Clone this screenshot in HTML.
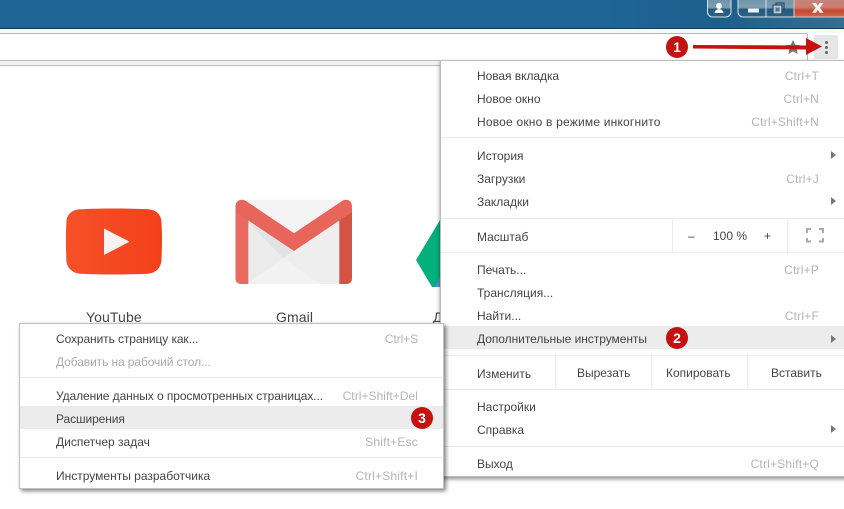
<!DOCTYPE html>
<html><head><meta charset="utf-8"><style>
html,body{margin:0;padding:0;background:#fff}
#r{position:relative;width:844px;height:509px;overflow:hidden;background:#fff;font-family:"Liberation Sans",sans-serif;font-size:12px;color:#444}
#r div{position:absolute}
.t{white-space:nowrap;line-height:16px}
.s{white-space:nowrap;line-height:16px;color:#b4b4b4;letter-spacing:.2px;text-align:right}
.h{height:1px;background:#ebebeb}
.v{width:1px;background:#ebebeb}
.a{width:0;height:0;border-left:5px solid #777;border-top:4px solid transparent;border-bottom:4px solid transparent}
.b{width:22px;height:22px;border-radius:50%;background:#c3120f;color:#fff;font-weight:bold;font-size:14px;line-height:22px;text-align:center}
.l{white-space:nowrap;font-size:14px;color:#444;line-height:18px;letter-spacing:.1px}
</style></head><body><div id="r">
<div style="left:0;top:0;width:844px;height:28px;background:linear-gradient(90deg,#1f6596 0,#1f6596 72%,#1c5f8c 85%,#356f90 100%)"></div>
<div style="left:0;top:28px;width:844px;height:1px;background:#123c55"></div>
<div style="left:0;top:29px;width:844px;height:4px;background:#f4f9fc"></div>
<div style="left:-6px;top:33px;width:812px;height:26px;background:#fff;border:1px solid #b9b9b9;border-radius:2px"></div>
<div style="left:0;top:61px;width:844px;height:4px;background:#f2f2f2"></div>
<div style="left:0;top:65px;width:844px;height:1px;background:#bcbcbc"></div>
<div style="left:814px;top:35px;width:24px;height:24px;background:#e6e6e6;border-radius:2px"></div>
<div style="left:825px;top:41px;width:3px;height:3px;border-radius:50%;background:#666"></div>
<div style="left:825px;top:46px;width:3px;height:3px;border-radius:50%;background:#666"></div>
<div style="left:825px;top:51px;width:3px;height:3px;border-radius:50%;background:#666"></div>

<svg style="position:absolute;left:700px;top:0" width="144" height="30">
<defs><linearGradient id="gl" x1="0" y1="0" x2="0" y2="1"><stop offset="0" stop-color="#6f93a9"/><stop offset=".5" stop-color="#7d9db2"/><stop offset=".6" stop-color="#24597c"/><stop offset="1" stop-color="#2e6485"/></linearGradient>
<linearGradient id="rd" x1="0" y1="0" x2="0" y2="1"><stop offset="0" stop-color="#c08a82"/><stop offset=".5" stop-color="#cf7a6c"/><stop offset=".65" stop-color="#c8452c"/><stop offset="1" stop-color="#c96a58"/></linearGradient></defs>
<path d="M7.500 -2V12a5 5 0 0 0 5 5H26a5 5 0 0 0 5-5V-2z" fill="url(#gl)" stroke="#d5e0e8"/>
<path d="M38 -2V12a5 5 0 0 0 5 5H94V-2z" fill="url(#gl)" stroke="#d5e0e8"/>
<path d="M94 -2V17H144V-2z" fill="url(#rd)"/>
<path d="M94 0V17H144" fill="none" stroke="#d5c8c6"/>
<path d="M66 0V17" stroke="#d5e0e8"/>
<circle cx="19" cy="6" r="3" fill="#fff"/><path d="M14.500 13c0-5 9-5 9 0z" fill="#fff"/>
<rect x="48" y="8.500" width="11" height="4" fill="#f0f3f5"/>
<rect x="76" y="3" width="8" height="8" fill="none" stroke="#2c4d64" stroke-width="1.200"/>
<rect x="73" y="5" width="9" height="9" fill="#b9cad5" stroke="#2c4d64" stroke-width="1.200"/>
<rect x="75.500" y="7.500" width="4" height="4" fill="#517691"/>
<path d="M112 3h4l1.800 2.800L119.600 3h4l-3.700 4.700 3.700 5h-4l-1.800-2.800-1.800 2.800h-4l3.700-5z" fill="#f7f2f0"/>
</svg>

<svg style="position:absolute;left:780px;top:38px" width="26" height="20"><path d="M13 2l2.200 4.700 5.200.6-3.800 3.500 1 5.200-4.600-2.600-4.600 2.600 1-5.200-3.800-3.500 5.200-.6z" fill="#777"/></svg>
<svg style="position:absolute;left:690px;top:34px" width="136" height="26"><path d="M3 11L116 11.500L116 4L132 12.500L116 21L116 15.500L3 14.500z" fill="#c3120f"/></svg>
<div class="b" style="left:666px;top:36px">1</div>

<svg style="position:absolute;left:60px;top:195px" width="381" height="110">
<defs><linearGradient id="yt" x1="0" y1="0" x2="1" y2="0"><stop offset="0" stop-color="#f65129"/><stop offset="1" stop-color="#f3401b"/></linearGradient></defs>
<path d="M20 14.800C40 13.800 68 13.800 88 14.800C96 15.300 101 20 101.400 27C102.200 39 102.200 52 101.400 66C101 73 96 78.500 88 79.200C68 80.200 40 80.200 20 79.200C12 78.500 6.800 73 6.400 66C5.700 52 5.700 39 6.400 27C6.800 20 12 15.300 20 14.800z" fill="url(#yt)" transform="translate(0,-.5)"/>
<path d="M44 33.500L69.500 46.700L44 60z" fill="#f6f3f1"/>
<path d="M182 4.700H286V89H182z" fill="#f3f3f3"/>
<path d="M279 27V89H260L223 63L234 50z" fill="#eeeeee"/>
<path d="M188 27L234 50L223 63L188 89z" fill="#ececec"/>
<path d="M188 89L223 63L260 89z" fill="#f2f2f2"/>
<path d="M188 27L234 56L223 63z" fill="#e3e3e3"/>
<path d="M175.500 12V84a5 5 0 0 0 5 5H188.300V20z" fill="#e86a60"/>
<path d="M292 12V84a5 5 0 0 1-5 5H279.300V20z" fill="#d55342"/>
<path d="M175.500 11C175.500 5.500 181.500 3 186 6L234 38.300L282 6C286.500 3 292 5.500 292 11V17L234 56L175.500 17z" fill="#e8655c"/>
<path d="M356 65L380 25V92L376 92L372 92z" fill="#02af7d"/>
<path d="M374.500 92L380 83V92z" fill="#5d8fd0"/>
</svg>
<div class="l" style="left:86px;top:308px">YouTube</div>
<div class="l" style="left:276px;top:308px">Gmail</div>
<div class="l" style="left:433px;top:308px">Д</div>

<div style="left:440px;top:60px;width:410px;height:415px;background:#fff;border:1px solid #bdbdbd;box-shadow:0 2px 4px rgba(0,0,0,.45)"></div>
<div class="t" style="left:477px;top:68px;letter-spacing:-.05px">Новая вкладка</div><div class="s" style="right:25px;top:68px">Ctrl+T</div>
<div class="t" style="left:477px;top:91px">Новое окно</div><div class="s" style="right:25px;top:91px">Ctrl+N</div>
<div class="t" style="left:477px;top:114px;letter-spacing:.2px">Новое окно в режиме инкогнито</div><div class="s" style="right:25px;top:114px">Ctrl+Shift+N</div>
<div class="h" style="left:441px;top:137px;width:403px"></div>
<div class="t" style="left:477px;top:148px">История</div><div class="a" style="left:831px;top:151px"></div>
<div class="t" style="left:477px;top:171px">Загрузки</div><div class="s" style="right:25px;top:171px">Ctrl+J</div>
<div class="t" style="left:477px;top:194px">Закладки</div><div class="a" style="left:831px;top:197px"></div>
<div class="h" style="left:441px;top:218px;width:403px"></div>
<div class="t" style="left:477px;top:229px">Масштаб</div>
<div class="v" style="left:672px;top:219px;height:33px"></div>
<div class="v" style="left:787px;top:219px;height:33px"></div>
<div class="t" style="left:688px;top:228px">–</div>
<div class="t" style="left:713px;top:228px">100 %</div>
<div class="t" style="left:764px;top:228px">+</div>
<svg style="position:absolute;left:805px;top:227px" width="20" height="16"><path d="M2 6V2H6M14 2H18V6M18 11V14.500H14M6 14.500H2V11" fill="none" stroke="#aaa" stroke-width="2"/></svg>
<div class="h" style="left:441px;top:252px;width:403px"></div>
<div class="t" style="left:477px;top:262px">Печать...</div><div class="s" style="right:25px;top:262px">Ctrl+P</div>
<div class="t" style="left:477px;top:285px">Трансляция...</div>
<div class="t" style="left:477px;top:308px">Найти...</div><div class="s" style="right:25px;top:308px">Ctrl+F</div>
<div style="left:441px;top:326px;width:403px;height:23px;background:#ececec"></div>
<div class="t" style="left:477px;top:331px;letter-spacing:-.05px">Дополнительные инструменты</div><div class="a" style="left:831px;top:335px"></div>
<div class="b" style="left:666px;top:327px">2</div>
<div class="h" style="left:441px;top:355px;width:403px"></div>
<div class="t" style="left:477px;top:366px">Изменить</div>
<div class="v" style="left:555px;top:356px;height:33px"></div>
<div class="t" style="left:577px;top:365px">Вырезать</div>
<div class="v" style="left:651px;top:356px;height:33px"></div>
<div class="t" style="left:666px;top:365px">Копировать</div>
<div class="v" style="left:747px;top:356px;height:33px"></div>
<div class="t" style="left:771px;top:365px">Вставить</div>
<div class="h" style="left:441px;top:389px;width:403px"></div>
<div class="t" style="left:477px;top:399px">Настройки</div>
<div class="t" style="left:477px;top:422px">Справка</div><div class="a" style="left:831px;top:425px"></div>
<div class="h" style="left:441px;top:446px;width:403px"></div>
<div class="t" style="left:477px;top:456px">Выход</div><div class="s" style="right:25px;top:456px">Ctrl+Shift+Q</div>

<div style="left:19px;top:323px;width:423px;height:164px;background:#fff;border:1px solid #c0c0c0;box-shadow:2px 2px 4px rgba(0,0,0,.5)"></div>
<div class="t" style="left:56px;top:331px;letter-spacing:-.1px">Сохранить страницу как...</div><div class="s" style="right:426px;top:331px;letter-spacing:-.1px">Ctrl+S</div>
<div class="t" style="left:56px;top:354px;color:#aaa;letter-spacing:-.1px">Добавить на рабочий стол...</div>
<div class="h" style="left:20px;top:377px;width:422px"></div>
<div class="t" style="left:56px;top:388px;letter-spacing:-.08px">Удаление данных о просмотренных страницах...</div><div class="s" style="right:426px;top:388px;letter-spacing:.05px">Ctrl+Shift+Del</div>
<div style="left:20px;top:406px;width:423px;height:23px;background:#ececec"></div>
<div class="t" style="left:56px;top:411px;letter-spacing:-.1px">Расширения</div>
<div class="b" style="left:411px;top:407px">3</div>
<div class="t" style="left:56px;top:434px">Диспетчер задач</div><div class="s" style="right:426px;top:434px">Shift+Esc</div>
<div class="h" style="left:20px;top:457px;width:422px"></div>
<div class="t" style="left:56px;top:468px">Инструменты разработчика</div><div class="s" style="right:426px;top:468px">Ctrl+Shift+I</div>
</div></body></html>
